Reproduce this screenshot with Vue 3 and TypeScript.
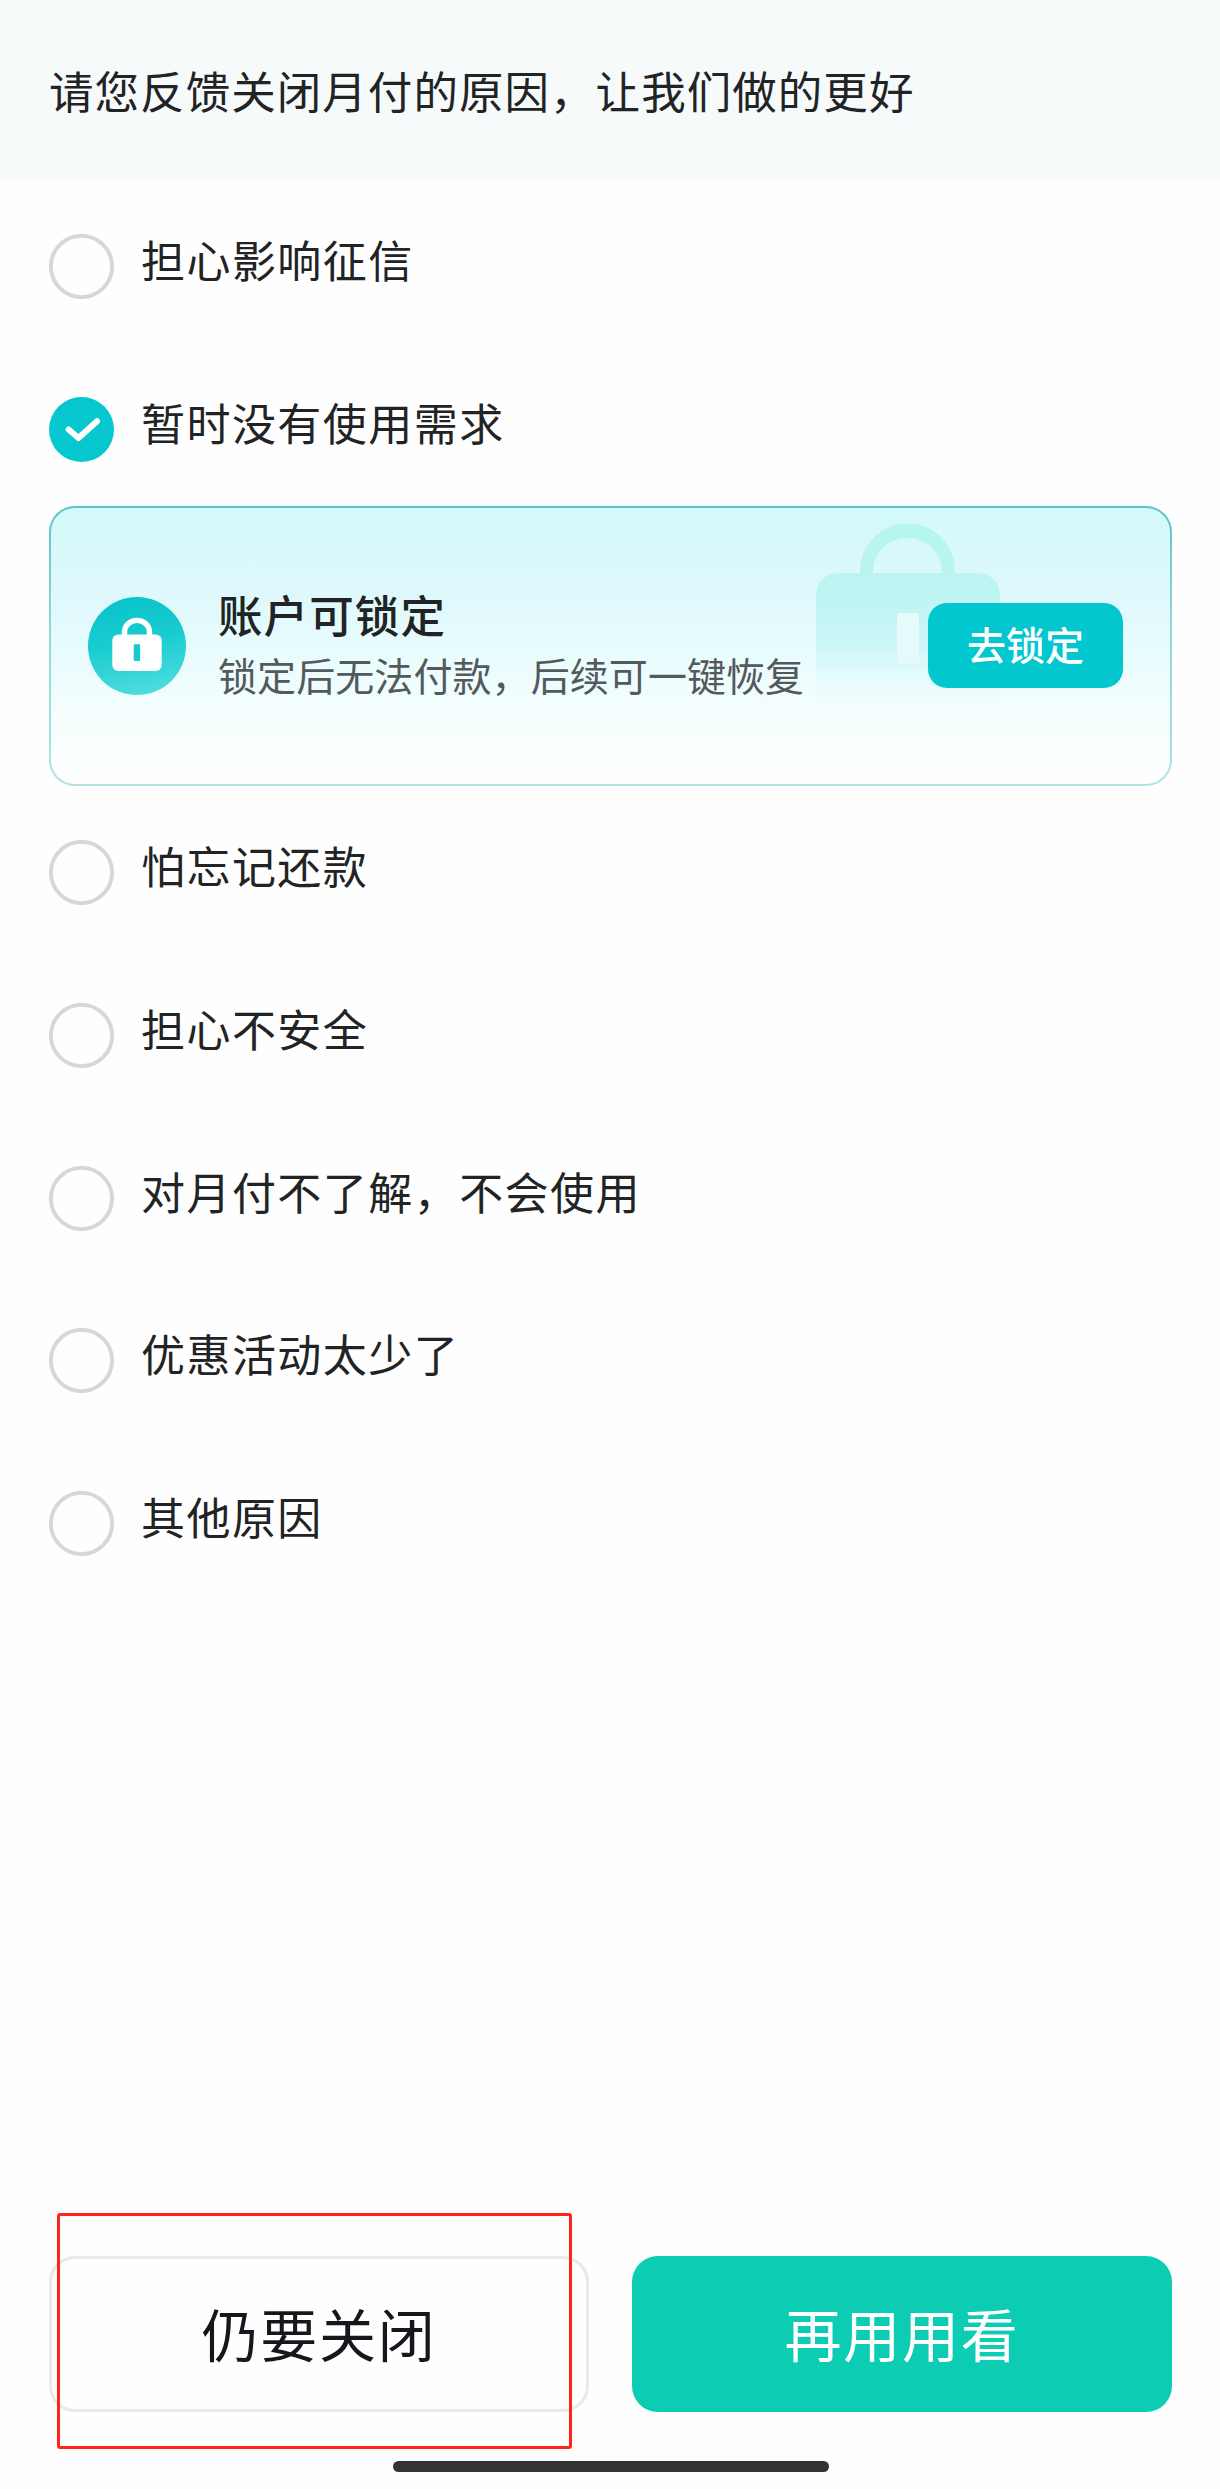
<script setup lang="ts">
import { ref } from 'vue'

interface Reason {
  id: number
  label: string
  lockable?: boolean
}

const reasons: Reason[] = [
  { id: 1, label: '担心影响征信' },
  { id: 2, label: '暂时没有使用需求', lockable: true },
  { id: 3, label: '怕忘记还款' },
  { id: 4, label: '担心不安全' },
  { id: 5, label: '对月付不了解，不会使用' },
  { id: 6, label: '优惠活动太少了' },
  { id: 7, label: '其他原因' },
]

const selected = ref<number>(2)
</script>

<template>
  <main class="page">
    <header class="header">
      <h1 class="title">请您反馈关闭月付的原因，让我们做的更好</h1>
    </header>

    <section class="reasons">
      <div v-for="reason in reasons" :key="reason.id" class="reason">
        <div class="option" @click="selected = reason.id">
          <svg class="radio" viewBox="0 0 65 65">
            <template v-if="selected === reason.id">
              <circle cx="32.5" cy="32.5" r="32.5" fill="#06c7cd" />
              <path d="M19.6 32.5 L29.5 41 L48 24.3" fill="none" stroke="#fff" stroke-width="6" stroke-linecap="round" stroke-linejoin="round" />
            </template>
            <circle v-else cx="32.5" cy="32.5" r="30.6" fill="none" stroke="#d7d7d7" stroke-width="3.9" />
          </svg>
          <span class="label">{{ reason.label }}</span>
        </div>

        <div v-if="reason.lockable && selected === reason.id" class="card">
          <svg class="watermark" viewBox="0 0 184 190">
            <defs>
              <linearGradient id="mark" x1="0" y1="0" x2="0" y2="190" gradientUnits="userSpaceOnUse">
                <stop offset="0" stop-color="#b5f5f0" />
                <stop offset="0.36" stop-color="#bdf4f2" />
                <stop offset="0.65" stop-color="#c4f5f6" stop-opacity="0.75" />
                <stop offset="0.97" stop-color="#e4fcfc" stop-opacity="0" />
              </linearGradient>
            </defs>
            <path
              fill="url(#mark)"
              fill-rule="evenodd"
              d="M44 50 V48 A47.5 47.5 0 0 1 139 48 V50 H162 Q184 52 184 74 V190 H0 V74 Q0 52 22 50 Z M57 50 H126 V48 A34.5 33 0 0 0 57 48 Z M81 90 H103 V140 H81 Z"
            />
            <rect x="81" y="90" width="22" height="50" fill="#e6fafb" />
          </svg>
          <svg class="lock" viewBox="0 0 98 98">
            <defs>
              <linearGradient id="disc" x1="0.4" y1="0" x2="0.6" y2="1">
                <stop offset="0" stop-color="#08c4ca" />
                <stop offset="0.45" stop-color="#1accd0" />
                <stop offset="1" stop-color="#4fdce0" />
              </linearGradient>
            </defs>
            <circle cx="49" cy="49" r="49" fill="url(#disc)" />
            <path d="M36.5 40 V35 A12.5 11.6 0 0 1 61.5 35 V40" fill="none" stroke="#fff" stroke-width="5.4" />
            <rect x="24.3" y="37.5" width="49.4" height="36.5" rx="6" fill="#fff" />
            <rect x="45.7" y="47.3" width="6.4" height="16.6" rx="0.8" fill="#16cbd0" />
          </svg>
          <div class="info">
            <strong class="info-title">账户可锁定</strong>
            <span class="info-text">锁定后无法付款，后续可一键恢复</span>
          </div>
          <button class="lock-button" type="button">去锁定</button>
        </div>
      </div>
    </section>

    <footer class="footer">
      <div class="actions">
        <button class="action close" type="button">
          仍要关闭
          <span class="highlight"></span>
        </button>
        <button class="action keep" type="button">再用用看</button>
      </div>
      <div class="home-bar"></div>
    </footer>
  </main>
</template>

<style>
body {
  margin: 0;
  background: #fefefe;
}
</style>

<style scoped>
.page {
  box-sizing: border-box;
  display: flex;
  flex-direction: column;
  width: 1220px;
  height: 2489px;
  background: #fefefe;
  font-family: "Noto Sans CJK SC", "Noto Sans", sans-serif;
  color: #212324;
}

button {
  box-sizing: border-box;
  margin: 0;
  padding: 0;
  border: 0;
  font-family: inherit;
}

.header {
  box-sizing: border-box;
  height: 180px;
  padding: 56px 49px 0;
  border-top: 2px solid #fbfbfb;
  background: #f6fafb;
}

.title {
  margin: 0;
  font-size: 44.5px;
  font-weight: 400;
  line-height: 64px;
  letter-spacing: 1.05px;
  white-space: nowrap;
}

.reasons {
  display: flex;
  flex-direction: column;
  gap: 97.7px;
  padding: 54px 48px 0 49px;
}

.reason:has(.card) {
  margin-bottom: -43.2px;
}

.option {
  display: flex;
  height: 65px;
}

.radio {
  width: 65px;
  height: 65px;
}

.label {
  margin-left: 27px;
  font-size: 44px;
  line-height: 50px;
  letter-spacing: 1.45px;
  white-space: nowrap;
}

.card {
  position: relative;
  box-sizing: border-box;
  display: flex;
  align-items: center;
  height: 280px;
  margin-top: 44px;
  padding: 0 47px 0 37px;
  border: 2px solid transparent;
  border-radius: 26px;
  background:
    linear-gradient(#d3f9f9, #def8fb 30%, #e8fcfd 52%, #f6fefe 76%, #fefefe) padding-box,
    linear-gradient(#5cc3c6, #8ad7d9 40%, #b0e4e2) border-box;
}

.watermark {
  position: absolute;
  top: 15px;
  left: 765px;
  width: 184px;
  height: 190px;
}

.lock {
  position: relative;
  width: 98px;
  height: 98px;
}

.info {
  position: relative;
  display: flex;
  flex-direction: column;
  margin-left: 32px;
  padding-bottom: 3px;
  white-space: nowrap;
}

.info-title {
  font-size: 44.5px;
  font-weight: 500;
  line-height: 61px;
  letter-spacing: 1.1px;
}

.info-text {
  color: #54595b;
  font-size: 39px;
  line-height: 61px;
  letter-spacing: 0.08px;
}

.lock-button {
  position: relative;
  width: 195px;
  height: 85px;
  margin-left: auto;
  padding-bottom: 5px;
  border-radius: 19px;
  background: #02c7cf;
  color: #fff;
  font-size: 39px;
  font-weight: 500;
  line-height: 78px;
}

.footer {
  margin-top: auto;
  padding: 0 48px 17px 49px;
}

.actions {
  display: grid;
  grid-template-columns: 540px 540px;
  justify-content: space-between;
}

.action {
  position: relative;
  height: 156px;
  padding-bottom: 4px;
  border-radius: 26px;
  font-size: 57px;
  letter-spacing: 1.8px;
  line-height: 152px;
}

.close {
  border: 3px solid #e9e9e9;
  background: transparent;
  color: #16171d;
  line-height: 146px;
}

.keep {
  background: #0cccb3;
  color: #fff;
}

.highlight {
  position: absolute;
  top: -46px;
  left: 5px;
  box-sizing: border-box;
  width: 515px;
  height: 236px;
  border: 3px solid #ff2419;
  border-radius: 3px;
}

.home-bar {
  width: 436px;
  height: 11px;
  margin: 49px auto 0;
  border-radius: 6px;
  background: #333;
}
</style>
